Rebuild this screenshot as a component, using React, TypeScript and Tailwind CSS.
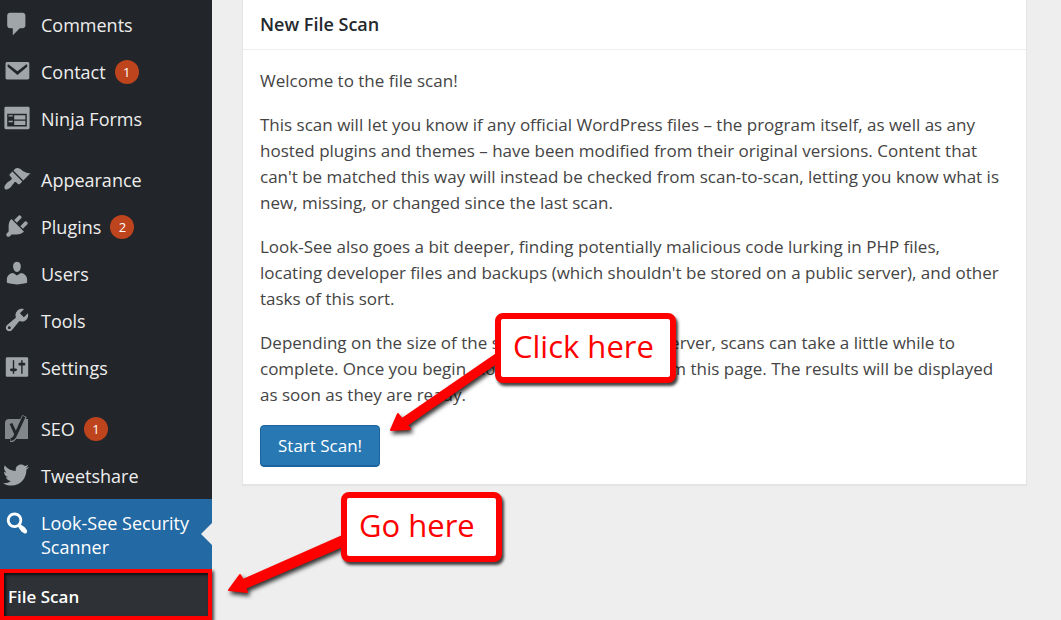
import React from 'react';
import { FaTwitter } from 'react-icons/fa';

interface MenuItem {
  label: string;
  icon: React.ReactNode;
  count?: number;
}

function Glyph({ d }: { d: string }) {
  return (
    <svg className="w-7 h-7 -mt-0.5" viewBox="0 0 20 20" fill="currentColor" fillRule="evenodd" aria-hidden="true">
      <path d={d} />
    </svg>
  );
}

const glyphs = {
  comments: 'M5 2h9c1.1 0 2 .9 2 2v7c0 1.1-.9 2-2 2h-2l-5 5v-5H5c-1.1 0-2-.9-2-2V4c0-1.1.9-2 2-2z',
  mail: 'M3 3.5h14.6c.7 0 1.2.5 1.2 1.2v10.2c0 .7-.5 1.2-1.2 1.2H3c-.7 0-1.2-.5-1.2-1.2V4.7c0-.7.5-1.2 1.2-1.2zM3.3 5.6v1.3l7 6 7-6V5.6c-.2-.3-.7-.4-1-.1l-6 4.700-6-4.700c-.3-.3-.8-.2-1 .1z',
  forms: 'M2 2h16c.55 0 1 .45 1 1v14c0 .55-.45 1-1 1H2c-.55 0-1-.45-1-1V3c0-.55.45-1 1-1zm15 14V7H3v9h14zM4 8v1h3V8H4zm4 0v3h8V8H8zm-4 4v1h3v-1H4zm4 0v3h8v-3H8z',
  appearance: 'M14.48 11.06L7.41 3.99l1.5-1.5c.5-.56 2.3-.47 3.51.32 1.21.8 1.43 1.28 2.91 2.1 1.18.64 2.45 1.26 4.45.85zm-.71.71L6.7 4.7 4.93 6.47c-.39.39-.39 1.02 0 1.41l1.06 1.06c.39.39.39 1.03 0 1.42-.6.6-1.43 1.11-2.21 1.69-.35.26-.7.53-1.01.84C1.43 14.23.4 16.08 1.4 17.07c.99 1 2.84-.03 4.18-1.36.31-.31.58-.66.85-1.02.57-.78 1.08-1.61 1.69-2.21.39-.39 1.02-.39 1.41 0l1.06 1.06c.39.39 1.02.39 1.41 0z',
  plugins: 'M13.11 4.36L9.87 7.6 8 5.73l3.24-3.24c.35-.34 1.05-.2 1.56.32.52.51.66 1.21.31 1.55zm-8 1.77l.91-1.12 9.01 9.01-1.19.84c-.71.71-2.63 1.16-3.82 1.16H6.14L4.9 17.26c-.59.59-1.54.59-2.12 0-.59-.58-.59-1.53 0-2.12l1.24-1.24v-3.88c0-1.13.4-3.19 1.09-3.89zm7.26 3.97l3.24-3.24c.34-.35 1.04-.21 1.55.31.52.51.66 1.21.31 1.55l-3.24 3.25z',
  users: 'M10 9.25c-2.27 0-2.73-3.44-2.73-3.44C7 4.02 7.82 2 9.97 2c2.16 0 2.98 2.02 2.71 3.81 0 0-.41 3.44-2.68 3.44zm0 2.57L12.72 10c2.39 0 4.52 2.33 4.52 4.53v2.49s-3.65 1.13-7.24 1.13c-3.65 0-7.24-1.13-7.24-1.13v-2.49c0-2.25 1.94-4.48 4.47-4.48z',
  tools: 'M16.68 9.77c-1.34 1.34-3.3 1.67-4.95.99l-5.41 6.52c-.99.99-2.59.99-3.58 0s-.99-2.59 0-3.57l6.52-5.42c-.68-1.65-.35-3.61.99-4.95 1.28-1.28 3.12-1.62 4.72-1.06l-2.89 2.89 2.82 2.82 2.86-2.87c.53 1.58.18 3.39-1.08 4.65zM3.81 16.21c.4.39 1.04.39 1.43 0 .4-.4.4-1.04 0-1.43-.39-.4-1.03-.4-1.43 0-.39.39-.39 1.03 0 1.43z',
  settings: 'M18 16V4c0-.55-.45-1-1-1H3c-.55 0-1 .45-1 1v12c0 .55.45 1 1 1h14c.55 0 1-.45 1-1zM8 11h1c.55 0 1 .45 1 1s-.45 1-1 1H8v1.5c0 .28-.22.5-.5.5s-.5-.22-.5-.5V13H6c-.55 0-1-.45-1-1s.45-1 1-1h1V5.500c0-.28.22-.5.5-.5s.5.22.5.5V11zm5-2h-1c-.55 0-1-.45-1-1s.45-1 1-1h1V5.500c0-.28.22-.5.5-.5s.5.22.5.5V7h1c.55 0 1 .45 1 1s-.45 1-1 1h-1v5.500c0 .28-.22.5-.5.5s-.5-.22-.5-.5V9z',
  search: 'M12.14 4.18c1.87 1.87 2.11 4.75.72 6.89.12.1.22.21.36.31.2.16.47.36.81.59.34.24.56.39.66.47.42.31.73.57.94.78.32.32.6.65.84 1 .25.35.44.69.59 1.04.14.35.21.68.18 1-.02.32-.14.59-.36.81s-.49.34-.81.36c-.31.02-.65-.04-.99-.19-.35-.14-.7-.34-1.04-.59-.35-.24-.68-.52-1-.84-.21-.21-.47-.52-.77-.93-.1-.13-.25-.35-.47-.66-.22-.32-.4-.57-.56-.78-.16-.2-.29-.35-.44-.5-2.07 1.09-4.69.76-6.44-.98-2.14-2.15-2.14-5.64 0-7.78 2.15-2.15 5.63-2.15 7.78 0zm-1.41 6.36c1.36-1.37 1.36-3.58 0-4.95-1.37-1.37-3.59-1.37-4.95 0-1.37 1.37-1.37 3.58 0 4.95 1.36 1.37 3.58 1.37 4.95 0z',
};

function SeoLogo() {
  return (
    <svg className="w-7 h-7 -mt-0.5" viewBox="0 0 28 28" aria-hidden="true">
      <path d="M6 5h12l-8 20H2V9c0-2.5 1.5-4 4-4zM22 5h3v20H13z" fill="#82878c" />
      <path d="M21.5 2l-9 19c-1.300 3.500-2.500 5-5.500 5" fill="none" stroke="#82878c" strokeWidth="5" />
      <path d="M8 9.500l4.500 10M21 2.500l-8.500 18.500c-1.300 3.300-2.500 4.500-5 4.500" fill="none" stroke="#222529" strokeWidth="3" />
    </svg>
  );
}

const groups: MenuItem[][] = [
  [
    { label: 'Comments', icon: <Glyph d={glyphs.comments} /> },
    { label: 'Contact', icon: <Glyph d={glyphs.mail} />, count: 1 },
    { label: 'Ninja Forms', icon: <Glyph d={glyphs.forms} /> },
  ],
  [
    { label: 'Appearance', icon: <Glyph d={glyphs.appearance} /> },
    { label: 'Plugins', icon: <Glyph d={glyphs.plugins} />, count: 2 },
    { label: 'Users', icon: <Glyph d={glyphs.users} /> },
    { label: 'Tools', icon: <Glyph d={glyphs.tools} /> },
    { label: 'Settings', icon: <Glyph d={glyphs.settings} /> },
  ],
  [
    { label: 'SEO', icon: <SeoLogo />, count: 1 },
    { label: 'Tweetshare', icon: <FaTwitter className="w-[26px] h-[26px] -mt-0.5" /> },
  ],
];

function Sidebar() {
  return (
    <nav className="w-[212px] shrink-0 bg-[#222529] text-[18px] leading-6 text-[#eeeeee]">
      <div className="flex flex-col gap-[14px] pt-px">
        {groups.map((items, i) => (
          <ul key={i}>
            {items.map((item) => (
              <li key={item.label}>
                <a href="#" className="flex items-center h-[47px] pl-[3px]">
                  <span className="w-[38px] shrink-0 text-[#a0a5aa]">{item.icon}</span>
                  {item.label}
                  {item.count && (
                    <span className="ml-[9px] w-6 h-6 rounded-full bg-[#be441d] text-white text-[13px] text-center">
                      {item.count}
                    </span>
                  )}
                </a>
              </li>
            ))}
          </ul>
        ))}
      </div>

      {/* Current section */}
      <a href="#" className="relative flex h-[70px] pt-3 pl-[3px] bg-[#2369a3] text-white">
        <span className="w-[38px] shrink-0">
          <Glyph d={glyphs.search} />
        </span>
        <span>Look-See Security Scanner</span>
        <svg className="absolute right-0 top-[24px] w-[11px] h-[22px]" viewBox="0 0 11 22" aria-hidden="true">
          <path d="M11 0v22L0 11z" fill="#eeeeee" />
        </svg>
      </a>
      <a
        href="#"
        className="flex items-center h-[51px] pt-1 pl-1 border-4 border-[#fe0000] bg-[#2e3136] text-white text-[17px] font-semibold shadow-[2px_2px_3px_rgba(0,0,0,0.7),inset_2px_2px_3px_rgba(0,0,0,0.7)]"
      >
        File Scan
      </a>
    </nav>
  );
}

function Callout({ className, children }: { className: string; children: React.ReactNode }) {
  return (
    <div
      className={`absolute h-[70px] pl-3 pb-1 flex items-center border-6 border-[#fe0000] rounded-lg bg-white text-[#fe0000] text-[31px] leading-none whitespace-nowrap shadow-[2px_3px_3px_rgba(0,0,0,0.75)] ${className}`}
    >
      {children}
    </div>
  );
}

function Arrow({ className, viewBox, d }: { className: string; viewBox: string; d: string }) {
  return (
    <svg
      className={`absolute overflow-visible drop-shadow-[2px_3px_2px_rgba(0,0,0,0.8)] ${className}`}
      viewBox={viewBox}
      aria-hidden="true"
    >
      <path d={d} fill="#fe0000" stroke="#fe0000" strokeWidth="2" strokeLinejoin="round" />
    </svg>
  );
}

export default function App() {
  return (
    <div
      className="relative flex min-h-screen overflow-hidden bg-[#eeeeee]"
      style={{ fontFamily: '"Open Sans", "Noto Sans", sans-serif' }}
    >
      <Sidebar />

      <main className="flex-1 pl-[30px] pr-[34px]">
        <section className="bg-white border border-t-0 border-[#e5e5e5] shadow-[0_1px_1px_rgba(0,0,0,0.04)]">
          <h2 className="h-[50px] flex items-center px-[17px] border-b border-[#eeeeee] text-[18px] font-semibold text-[#23282d]">
            New File Scan
          </h2>
          <div className="pt-[18px] pb-[17px] pl-[17px] pr-[22px] text-[17px] leading-[26px] text-[#444444]">
            <div className="flex flex-col gap-[18px]">
              <p>Welcome to the file scan!</p>
              <p>
                This scan will let you know if any official WordPress files – the program itself, as well as any
                hosted plugins and themes – have been modified from their original versions. Content that
                can't be matched this way will instead be checked from scan-to-scan, letting you know what is
                new, missing, or changed since the last scan.
              </p>
              <p>
                Look-See also goes a bit deeper, finding potentially malicious code lurking in PHP files,
                locating developer files and backups (which shouldn't be stored on a public server), and other
                tasks of this sort.
              </p>
              <p>
                Depending on the size of the site and speed of the server, scans can take a little while to
                complete. Once you begin, do not navigate away from this page. The results will be displayed
                as soon as they are ready.
              </p>
            </div>
            <button
              type="button"
              className="block mt-[17px] h-[42px] px-[17px] rounded-[4px] border border-[#1c649b] bg-[#2879b3] text-white text-[17px] leading-6 shadow-[inset_0_-1px_0_#1c649b]"
            >
              Start Scan!
            </button>
          </div>
        </section>
      </main>

      {/* Tutorial annotations */}
      <Arrow
        className="left-[390px] top-[350px] w-[112px] h-[84px]"
        viewBox="390 350 112 84"
        d="M391 430L398 414L402 419L498 353V362L407 425L410 429Z"
      />
      <Callout className="left-[495px] top-[313px] w-[181px]">Click here</Callout>
      <Arrow
        className="left-[228px] top-[530px] w-[120px] h-[66px]"
        viewBox="228 530 120 66"
        d="M229 590L240 575L243 580L345 535V545L245 588L247 592Z"
      />
      <Callout className="left-[341px] top-[492px] w-[161px]">Go here</Callout>
    </div>
  );
}
